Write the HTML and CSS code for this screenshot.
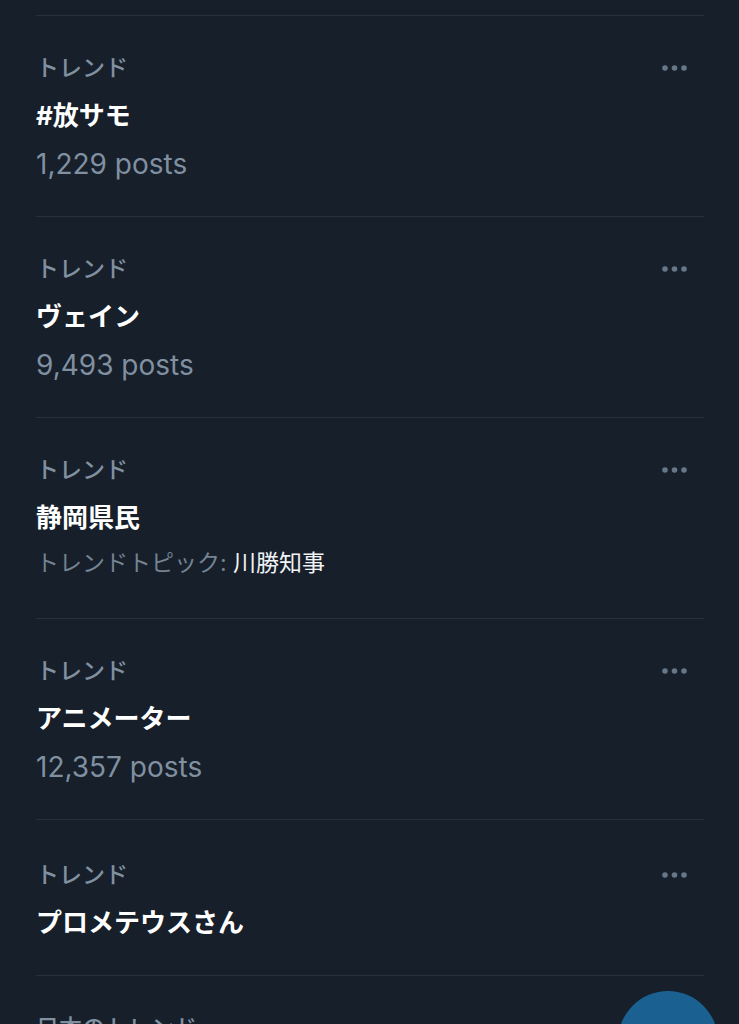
FILE: index.html
```html
<!DOCTYPE html>
<html lang="ja">
<head>
  <meta charset="UTF-8">
  <meta name="viewport" content="width=device-width, initial-scale=1.0">
  <title>トレンド</title>
  <link rel="stylesheet" href="styles.css">
</head>
<body>
  <main class="trends">
    <article class="trend">
      <div class="trend-text">
        <p class="label">トレンド</p>
        <h2 class="title">#放サモ</h2>
        <p class="posts">1,229 posts</p>
      </div>
      <button class="more" type="button" aria-label="もっと見る">
        <svg viewBox="0 0 26 6"><circle cx="3" cy="3" r="2.8"/><circle cx="12.5" cy="3" r="2.8"/><circle cx="22" cy="3" r="2.8"/></svg>
      </button>
    </article>
    <article class="trend">
      <div class="trend-text">
        <p class="label">トレンド</p>
        <h2 class="title">ヴェイン</h2>
        <p class="posts">9,493 posts</p>
      </div>
      <button class="more" type="button" aria-label="もっと見る">
        <svg viewBox="0 0 26 6"><circle cx="3" cy="3" r="2.8"/><circle cx="12.5" cy="3" r="2.8"/><circle cx="22" cy="3" r="2.8"/></svg>
      </button>
    </article>
    <article class="trend">
      <div class="trend-text">
        <p class="label">トレンド</p>
        <h2 class="title">静岡県民</h2>
        <p class="topic">トレンドトピック: <a href="#">川勝知事</a></p>
      </div>
      <button class="more" type="button" aria-label="もっと見る">
        <svg viewBox="0 0 26 6"><circle cx="3" cy="3" r="2.8"/><circle cx="12.5" cy="3" r="2.8"/><circle cx="22" cy="3" r="2.8"/></svg>
      </button>
    </article>
    <article class="trend">
      <div class="trend-text">
        <p class="label">トレンド</p>
        <h2 class="title">アニメーター</h2>
        <p class="posts">12,357 posts</p>
      </div>
      <button class="more" type="button" aria-label="もっと見る">
        <svg viewBox="0 0 26 6"><circle cx="3" cy="3" r="2.8"/><circle cx="12.5" cy="3" r="2.8"/><circle cx="22" cy="3" r="2.8"/></svg>
      </button>
    </article>
    <!-- 投稿数なし -->
    <article class="trend short">
      <div class="trend-text">
        <p class="label">トレンド</p>
        <h2 class="title">プロメテウスさん</h2>
      </div>
      <button class="more" type="button" aria-label="もっと見る">
        <svg viewBox="0 0 26 6"><circle cx="3" cy="3" r="2.8"/><circle cx="12.5" cy="3" r="2.8"/><circle cx="22" cy="3" r="2.8"/></svg>
      </button>
    </article>
    <article class="trend">
      <div class="trend-text">
        <p class="label">日本のトレンド</p>
      </div>
    </article>
  </main>
  <button class="compose" type="button" aria-label="ポストする"></button>
</body>
</html>
```
FILE: styles.css
```css
html {
  height: 100%;
  overflow: hidden;
}
body {
  height: 100%;
  margin: 0;
  overflow: hidden;
  background-color: #161f2a;
  color: #8090a0;
  font-family: Inter, "Noto Sans CJK JP", sans-serif;
}
.trends {
  padding: 15px 35px 0 36px;
}
.trend {
  display: flex;
  justify-content: space-between;
  align-items: flex-start;
  box-sizing: border-box;
  min-height: 201px;
  padding: 28px 16px 28px 0;
  border-top: 1px solid #26313b;
}
.short {
  min-height: 0;
  padding: 31px 16px 28px 0;
}
.label, .title, .posts, .topic {
  margin: 0;
  line-height: 48px;
  white-space: nowrap;
}
.label {
  font-size: 23px;
  font-weight: 500;
}
.title {
  color: #fff;
  font-size: 26px;
  font-weight: 700;
}
.posts {
  font-size: 28px;
}
.topic {
  color: #748291;
  font-size: 23px;
  font-weight: 400;
  line-height: 42px;
}
.topic a {
  color: #f0f2f4;
  text-decoration: none;
}
.more {
  display: flex;
  align-items: center;
  height: 48px;
  padding: 0;
  border: none;
  background: none;
  cursor: pointer;
}
.more svg {
  width: 26px;
  height: 6px;
  fill: #667788;
}
.compose {
  position: fixed;
  right: 21px;
  bottom: -67px;
  width: 100px;
  height: 100px;
  border: none;
  border-radius: 50%;
  background-color: #1a6192;
  cursor: pointer;
}
```
